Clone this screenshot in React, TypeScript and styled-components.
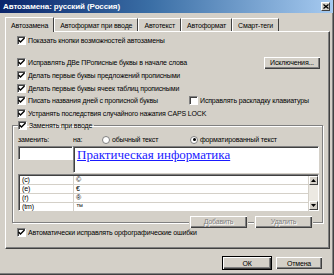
import React from 'react';
import styled, { createGlobalStyle } from 'styled-components';

const GlobalStyle = createGlobalStyle`
  html, body {
    margin: 0;
    padding: 0;
    background: #d4d0c8;
  }
  body {
    font-family: "Liberation Sans", Arial, sans-serif;
    font-size: 7px;
    letter-spacing: -0.15px;
    color: #000;
  }
`;

const Window = styled.div`
  width: 334px;
  height: 275px;
  box-sizing: border-box;
  background: #d4d0c8;
  border-right: 1px solid #404040;
  border-bottom: 1px solid #404040;
  box-shadow: inset -1px -1px 0 #808080;
  display: flex;
  flex-direction: column;
`;

const TitleBar = styled.div`
  height: 13px;
  background: linear-gradient(to right, #0a246a 0%, #3a6ea5 45%, #a6caf0 100%);
  display: flex;
  align-items: center;
  justify-content: space-between;
  padding: 0 3px 0 3px;
  color: #fff;
  font-weight: bold;
  font-size: 8px;
  letter-spacing: -0.1px;
`;

const CloseBox = styled.div`
  width: 9px;
  height: 9px;
  box-sizing: border-box;
  background: #d4d0c8;
  border-top: 1px solid #fff;
  border-left: 1px solid #fff;
  border-right: 1px solid #404040;
  border-bottom: 1px solid #404040;
  display: flex;
  align-items: center;
  justify-content: center;
`;

const TabStrip = styled.div`
  display: flex;
  align-items: flex-end;
  height: 15px;
  margin-top: 3px;
  padding-left: 5px;
  position: relative;
  z-index: 1;
`;

const Tab = styled.div<{ $active?: boolean }>`
  height: ${(p) => (p.$active ? 15 : 13)}px;
  box-sizing: border-box;
  padding: 0 5px;
  margin-bottom: ${(p) => (p.$active ? -1 : 0)}px;
  background: #d4d0c8;
  border-top: 1px solid #fff;
  border-left: 1px solid #fff;
  border-right: 1px solid #404040;
  display: flex;
  align-items: center;
  white-space: nowrap;
`;

const Panel = styled.div`
  margin: 0 3px 0 5px;
  height: 218px;
  box-sizing: border-box;
  border-top: 1px solid #fff;
  border-left: 1px solid #fff;
  border-right: 1px solid #404040;
  border-bottom: 1px solid #404040;
  box-shadow: inset -1px -1px 0 #808080;
  padding: 2px 8px 0 11px;
  display: flex;
  flex-direction: column;
`;

const Row = styled.div<{ $mt?: number }>`
  height: 12.6px;
  margin-top: ${(p) => p.$mt ?? 0}px;
  display: flex;
  align-items: center;
  white-space: nowrap;
`;

const Check = styled.label`
  display: flex;
  align-items: center;
  gap: 2px;
`;

const Box = styled.span`
  width: 9px;
  height: 9px;
  box-sizing: border-box;
  background: #fff;
  border-top: 1px solid #808080;
  border-left: 1px solid #808080;
  border-right: 1px solid #fff;
  border-bottom: 1px solid #fff;
  box-shadow: inset 1px 1px 0 #404040;
  display: flex;
  align-items: center;
  justify-content: center;
  flex: none;
`;

const Spacer = styled.div`
  flex: 1;
`;

const Button = styled.div<{ $w: number; $disabled?: boolean; $default?: boolean }>`
  width: ${(p) => p.$w}px;
  height: 14px;
  box-sizing: border-box;
  background: #d4d0c8;
  border: 1px solid ${(p) => (p.$default ? '#000' : 'transparent')};
  box-shadow: inset 1px 1px 0 #fff, inset -1px -1px 0 #404040, inset -2px -2px 0 #808080;
  display: flex;
  align-items: center;
  justify-content: center;
  color: ${(p) => (p.$disabled ? '#808080' : '#000')};
  text-shadow: ${(p) => (p.$disabled ? '1px 1px 0 #fff' : 'none')};
  flex: none;
`;

const Group = styled.fieldset`
  margin: 0 -2px 0 -5px;
  padding: 0 0 3px 5px;
  height: 103px;
  box-sizing: border-box;
  border: 1px solid #808080;
  box-shadow: 1px 1px 0 #fff, inset 1px 1px 0 #fff;
  display: flex;
  flex-direction: column;
  min-width: 0;
`;

const Legend = styled.legend`
  padding: 0 2px 0 0;
  margin-left: 0;
  height: 12px;
  display: flex;
  align-items: center;
`;

const LabelRow = styled.div`
  display: flex;
  align-items: center;
  height: 12px;
  margin-top: 2px;
`;

const Label = styled.span<{ $w: number }>`
  width: ${(p) => p.$w}px;
  flex: none;
`;

const Radio = styled.span`
  width: 8px;
  height: 8px;
  border-radius: 50%;
  background: #fff;
  box-sizing: border-box;
  border: 1px solid #808080;
  display: inline-flex;
  align-items: center;
  justify-content: center;
  margin-right: 2px;
  flex: none;
`;

const Dot = styled.span`
  width: 3px;
  height: 3px;
  border-radius: 50%;
  background: #000;
`;

const InputRow = styled.div`
  display: flex;
  margin-right: 3px;
`;

const Field = styled.div<{ $w?: number; $h: number }>`
  ${(p) => (p.$w ? `width: ${p.$w}px; flex: none;` : 'flex: 1;')}
  height: ${(p) => p.$h}px;
  box-sizing: border-box;
  background: #fff;
  border-top: 1px solid #808080;
  border-left: 1px solid #808080;
  border-right: 1px solid #fff;
  border-bottom: 1px solid #fff;
  box-shadow: inset 1px 1px 0 #404040;
  padding: 1px 3px;
`;

const Formatted = styled.span`
  font-family: "Liberation Serif", "Times New Roman", serif;
  font-size: 13px;
  letter-spacing: 0;
  color: #1a1aff;
  text-decoration: underline;
  line-height: 13px;
`;

const List = styled.div`
  display: flex;
  margin: 1px 3px 0 0;
  height: 37px;
  box-sizing: border-box;
  border-top: 1px solid #808080;
  border-left: 1px solid #808080;
  border-right: 1px solid #fff;
  border-bottom: 1px solid #fff;
  box-shadow: inset 1px 1px 0 #404040;
  background: #fff;
  padding: 1px 0 0 1px;
`;

const Rows = styled.div`
  flex: 1;
  display: flex;
  flex-direction: column;
`;

const ListRow = styled.div`
  display: flex;
  height: 8.7px;
  border-bottom: 1px solid #d4d0c8;
  line-height: 8px;
`;

const Cell = styled.div<{ $w?: number }>`
  ${(p) => (p.$w ? `width: ${p.$w}px; flex: none;` : 'flex: 1;')}
  padding-left: 2px;
  box-sizing: border-box;
  border-right: 1px solid #d4d0c8;
  overflow: hidden;
`;

const ScrollBar = styled.div`
  width: 9px;
  display: flex;
  flex-direction: column;
  justify-content: space-between;
  background: #ece9e2;
`;

const Arrow = styled.div`
  height: 9px;
  box-sizing: border-box;
  background: #d4d0c8;
  border-top: 1px solid #fff;
  border-left: 1px solid #fff;
  border-right: 1px solid #404040;
  border-bottom: 1px solid #404040;
  display: flex;
  align-items: center;
  justify-content: center;
`;

const ButtonRow = styled.div`
  display: flex;
  justify-content: flex-end;
  gap: 6px;
  margin: 4px 9px 0 0;
`;

const Footer = styled.div`
  display: flex;
  justify-content: flex-end;
  gap: 3px;
  padding: 7px 10px 0 0;
`;

const CheckMark = () => (
  <svg width="7" height="7" viewBox="0 0 7 7">
    <path d="M0.5 3 L2.5 5 L6.5 1" stroke="#000" strokeWidth="1.4" fill="none" />
  </svg>
);

const CheckBox = ({ on = true, children }: { on?: boolean; children: React.ReactNode }) => (
  <Check>
    <Box>{on && <CheckMark />}</Box>
    <span>{children}</span>
  </Check>
);

const entries: [string, string][] = [
  ['(c)', '©'],
  ['(e)', '€'],
  ['(r)', '®'],
  ['(tm)', '™'],
];

export default function App() {
  return (
    <>
      <GlobalStyle />
      <Window>
        <TitleBar>
          <span>Автозамена: русский (Россия)</span>
          <CloseBox>
            <svg width="6" height="5" viewBox="0 0 6 5">
              <path d="M0.5 0.5 L5.5 4.5 M5.5 0.5 L0.5 4.5" stroke="#000" strokeWidth="1.3" />
            </svg>
          </CloseBox>
        </TitleBar>

        <TabStrip>
          <Tab $active>Автозамена</Tab>
          <Tab>Автоформат при вводе</Tab>
          <Tab>Автотекст</Tab>
          <Tab>Автоформат</Tab>
          <Tab>Смарт-теги</Tab>
        </TabStrip>

        <Panel>
          <Row>
            <CheckBox>Показать кнопки возможностей автозамены</CheckBox>
          </Row>
          <Row $mt={10}>
            <CheckBox>Исправлять ДВе ПРописные буквы в начале слова</CheckBox>
            <Spacer />
            <Button $w={58}>Исключения...</Button>
          </Row>
          <Row>
            <CheckBox>Делать первые буквы предложений прописными</CheckBox>
          </Row>
          <Row>
            <CheckBox>Делать первые буквы ячеек таблиц прописными</CheckBox>
          </Row>
          <Row>
            <Label $w={172}>
              <CheckBox>Писать названия дней с прописной буквы</CheckBox>
            </Label>
            <CheckBox on={false}>Исправлять раскладку клавиатуры</CheckBox>
          </Row>
          <Row>
            <CheckBox>Устранять последствия случайного нажатия CAPS LOCK</CheckBox>
          </Row>

          <Group>
            <Legend>
              <CheckBox>Заменять при вводе</CheckBox>
            </Legend>
            <LabelRow>
              <Label $w={55}>заменить:</Label>
              <Label $w={29}>на:</Label>
              <Radio />
              <Label $w={78}>обычный текст</Label>
              <Radio>
                <Dot />
              </Radio>
              <span>форматированный текст</span>
            </LabelRow>
            <InputRow>
              <Field $w={55} $h={14} />
              <Field $h={27}>
                <Formatted>Практическая информатика</Formatted>
              </Field>
            </InputRow>
            <List>
              <Rows>
                {entries.map(([k, v]) => (
                  <ListRow key={k}>
                    <Cell $w={54}>{k}</Cell>
                    <Cell>{v}</Cell>
                  </ListRow>
                ))}
              </Rows>
              <ScrollBar>
                <Arrow>
                  <svg width="5" height="3" viewBox="0 0 5 3">
                    <path d="M2.5 0 L5 3 L0 3 Z" fill="#000" />
                  </svg>
                </Arrow>
                <Arrow>
                  <svg width="5" height="3" viewBox="0 0 5 3">
                    <path d="M0 0 L5 0 L2.5 3 Z" fill="#000" />
                  </svg>
                </Arrow>
              </ScrollBar>
            </List>
            <ButtonRow>
              <Button $w={59} $disabled>
                Добавить
              </Button>
              <Button $w={59} $disabled>
                Удалить
              </Button>
            </ButtonRow>
          </Group>

          <Row $mt={4}>
            <CheckBox>Автоматически исправлять орфографические ошибки</CheckBox>
          </Row>
        </Panel>

        <Footer>
          <Button $w={50} $default>
            ОК
          </Button>
          <Button $w={48}>Отмена</Button>
        </Footer>
      </Window>
    </>
  );
}
